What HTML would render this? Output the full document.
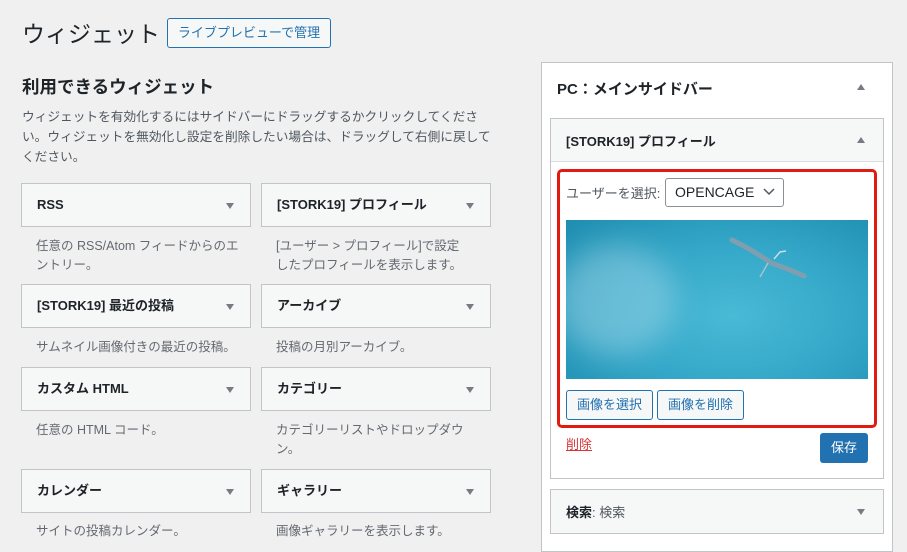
<!DOCTYPE html>
<html><head><meta charset="utf-8"><style>
*{box-sizing:border-box;margin:0;padding:0}
body{width:907px;height:544px;overflow:hidden;background:#f0f0f1;font-family:"Liberation Sans","Noto Sans CJK JP",sans-serif;color:#1d2327;position:relative}
.a{position:absolute}
.w{position:absolute;height:44px;width:230px;background:#f6f7f7;border:1px solid #c3c4c7;font-size:13px;font-weight:bold;padding:0 15px;line-height:42px}
.w:after{content:"";position:absolute;right:16px;top:19px;border-left:4px solid transparent;border-right:4px solid transparent;border-top:6px solid #787c82}
.d{position:absolute;width:218px;font-size:12.5px;color:#646970;line-height:19px}
.up{position:absolute;border-left:4px solid transparent;border-right:4px solid transparent;border-bottom:6px solid #787c82}
.btn{position:absolute;border:1px solid #2271b1;border-radius:3px;color:#2271b1;background:#f6f7f7;font-size:13px;text-align:center;line-height:28px}
</style></head><body>
<div class="a" style="left:22px;top:15px;font-size:23px;color:#1d2327;letter-spacing:0">ウィジェット</div>
<div class="a" style="left:167px;top:18px;width:164px;height:30px;border:1px solid #2271b1;border-radius:3px;background:#f6f7f7;color:#2271b1;font-size:13px;text-align:center;line-height:28px">ライブプレビューで管理</div>
<div class="a" style="left:22px;top:74px;font-size:17.5px;font-weight:bold">利用できるウィジェット</div>
<div class="a" style="left:22px;top:107px;width:475px;font-size:12.7px;color:#50575e;line-height:20px">ウィジェットを有効化するにはサイドバーにドラッグするかクリックしてください。ウィジェットを無効化し設定を削除したい場合は、ドラッグして右側に戻してください。</div>

<div class="w" style="left:21px;top:183px">RSS</div>
<div class="w" style="left:261px;top:183px">[STORK19] プロフィール</div>
<div class="d" style="left:36px;top:237px;width:208px">任意の RSS/Atom フィードからのエントリー。</div>
<div class="d" style="left:276px;top:237px;width:195px">[ユーザー &gt; プロフィール]で設定したプロフィールを表示します。</div>

<div class="w" style="left:21px;top:284px">[STORK19] 最近の投稿</div>
<div class="w" style="left:261px;top:284px">アーカイブ</div>
<div class="d" style="left:36px;top:338px;width:225px">サムネイル画像付きの最近の投稿。</div>
<div class="d" style="left:276px;top:338px">投稿の月別アーカイブ。</div>

<div class="w" style="left:21px;top:367px">カスタム HTML</div>
<div class="w" style="left:261px;top:367px">カテゴリー</div>
<div class="d" style="left:36px;top:421px">任意の HTML コード。</div>
<div class="d" style="left:276px;top:421px;width:192px">カテゴリーリストやドロップダウン。</div>

<div class="w" style="left:21px;top:469px">カレンダー</div>
<div class="w" style="left:261px;top:469px">ギャラリー</div>
<div class="d" style="left:36px;top:522px">サイトの投稿カレンダー。</div>
<div class="d" style="left:276px;top:522px">画像ギャラリーを表示します。</div>

<div class="a" style="left:541px;top:62px;width:352px;height:490px;background:#fff;border:1px solid #c3c4c7"></div>
<div class="a" style="left:557px;top:78px;font-size:15px;font-weight:bold">PC：メインサイドバー</div>
<div class="up" style="left:857px;top:84px"></div>

<div class="a" style="left:550px;top:118px;width:334px;height:361px;background:#fff;border:1px solid #c3c4c7"></div>
<div class="a" style="left:551px;top:119px;width:332px;height:43px;background:#f6f7f7;border-bottom:1px solid #dcdcde"></div>
<div class="a" style="left:566px;top:131px;font-size:13px;font-weight:bold">[STORK19] プロフィール</div>
<div class="up" style="left:857px;top:137px"></div>

<div class="a" style="left:557px;top:169px;width:320px;height:259px;border:3px solid #e01b12;border-radius:5px"></div>
<div class="a" style="left:566px;top:183px;font-size:13px;color:#50575e">ユーザーを選択:</div>
<div class="a" style="left:665px;top:178px;width:119px;height:29px;border:1px solid #8c8f94;border-radius:3px;background:#fff;font-size:14px;padding-left:9px;line-height:27px">OPENCAGE</div>
<svg class="a" style="left:762px;top:187px" width="14" height="10"><path d="M2 2l5 5 5-5" stroke="#50575e" stroke-width="1.5" fill="none"/></svg>

<div class="a" style="left:566px;top:220px;width:302px;height:159px;overflow:hidden;background:radial-gradient(ellipse at 55% 60%,#49bad6 0%,#35a8c9 50%,#1e8db0 100%)">
<div class="a" style="left:-10px;top:25px;width:120px;height:110px;border-radius:50%;background:rgba(200,230,240,.35);filter:blur(14px)"></div>
<svg class="a" style="left:160px;top:15px" width="90" height="50"><path d="M6 5 Q25 14 42 26 L45 28 Q60 33 78 41" stroke="#7f9fb0" stroke-width="5" fill="none" stroke-linecap="round"/><path d="M42 28 L34 42" stroke="#a4c4d0" stroke-width="1.5"/><path d="M48 24 L54 17 L60 16" stroke="#c8dde4" stroke-width="1.5" fill="none"/></svg>
</div>
<div class="btn" style="left:566px;top:390px;width:87px;height:30px">画像を選択</div>
<div class="btn" style="left:657px;top:390px;width:87px;height:30px">画像を削除</div>
<div class="a" style="left:566px;top:434px;font-size:13px;color:#d63638;text-decoration:underline">削除</div>
<div class="a" style="left:820px;top:433px;width:48px;height:30px;background:#2271b1;border-radius:3px;color:#fff;font-size:13px;text-align:center;line-height:30px">保存</div>

<div class="a" style="left:550px;top:489px;width:334px;height:45px;background:#f6f7f7;border:1px solid #c3c4c7"></div>
<div class="a" style="left:566px;top:502px;font-size:13px"><b>検索</b><span style="color:#50575e">: 検索</span></div>
<div class="a" style="left:857px;top:509px;border-left:4px solid transparent;border-right:4px solid transparent;border-top:6px solid #787c82"></div>
</body></html>
